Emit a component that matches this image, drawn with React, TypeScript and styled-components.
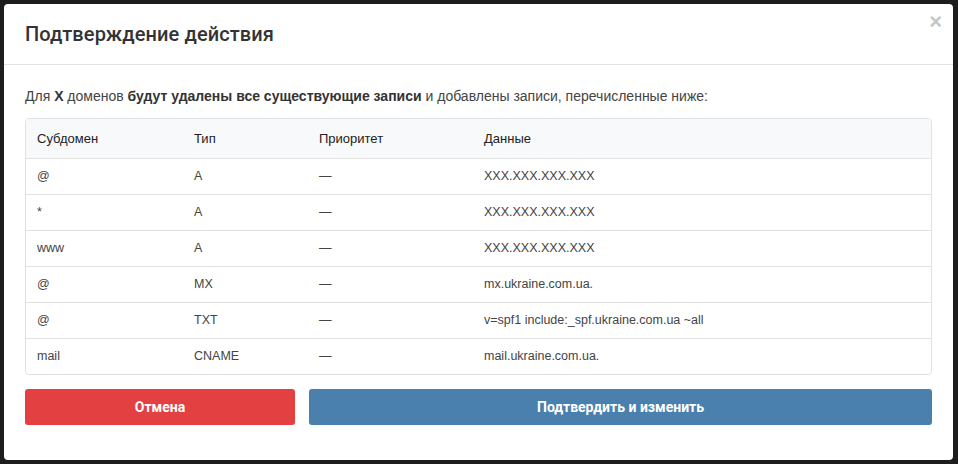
import React from "react";
import styled, { createGlobalStyle } from "styled-components";

interface DnsRecord {
  id: number;
  subdomain: string;
  type: string;
  priority: string;
  data: string;
}

const records: DnsRecord[] = [
  { id: 1, subdomain: "@", type: "A", priority: "—", data: "XXX.XXX.XXX.XXX" },
  { id: 2, subdomain: "*", type: "A", priority: "—", data: "XXX.XXX.XXX.XXX" },
  { id: 3, subdomain: "www", type: "A", priority: "—", data: "XXX.XXX.XXX.XXX" },
  { id: 4, subdomain: "@", type: "MX", priority: "—", data: "mx.ukraine.com.ua." },
  { id: 5, subdomain: "@", type: "TXT", priority: "—", data: "v=spf1 include:_spf.ukraine.com.ua ~all" },
  { id: 6, subdomain: "mail", type: "CNAME", priority: "—", data: "mail.ukraine.com.ua." },
];

const GlobalStyle = createGlobalStyle`
  html, body {
    margin: 0;
    padding: 0;
    background: #1d1d1d;
    font-family: "Liberation Sans", Arial, sans-serif;
  }
`;

const Backdrop = styled.div`
  width: 958px;
  height: 464px;
  padding: 4px 5px 4px 4px;
  box-sizing: border-box;
  background: #1d1d1d;
`;

const Modal = styled.div`
  position: relative;
  height: 100%;
  background: #fff;
  border-radius: 4px;
  display: flex;
  flex-direction: column;
`;

const Header = styled.div`
  height: 60px;
  border-bottom: 1px solid #e2e2e2;
  display: flex;
  align-items: center;
  padding: 0 21px;
`;

const Title = styled.h2`
  margin: 0;
  font-family: Roboto, "Liberation Sans", Arial, sans-serif;
  font-size: 20px;
  font-weight: 500;
  color: #333;
  letter-spacing: 0.1px;
`;

const Close = styled.button`
  position: absolute;
  top: 7px;
  right: 11px;
  border: 0;
  background: none;
  padding: 0;
  font-family: "Liberation Sans", Arial, sans-serif;
  font-size: 22px;
  font-weight: 700;
  line-height: 1;
  color: #c6c6c6;
  cursor: pointer;
`;

const Body = styled.div`
  padding: 21px 21px 0;
  display: flex;
  flex-direction: column;
`;

const Lead = styled.p`
  margin: 0 0 12px;
  font-size: 14px;
  color: #444;
  line-height: 20px;

  b {
    color: #333;
  }
`;

const TableBox = styled.div`
  border: 1px solid #e2e2e2;
  border-radius: 4px;
  overflow: hidden;
`;

const Table = styled.table`
  width: 100%;
  border-collapse: collapse;
  table-layout: fixed;
  font-size: 12.5px;
  color: #444;
`;

const Th = styled.th<{ $w?: number }>`
  box-sizing: border-box;
  width: ${(p) => (p.$w ? `${p.$w}px` : "auto")};
  text-align: left;
  font-size: 13px;
  font-weight: 400;
  color: #222;
  background: #f8f9fa;
  height: 39px;
  padding: 0 11px;
  border-bottom: 1px solid #e2e2e2;
`;

const Td = styled.td`
  height: 35px;
  padding: 0 11px;
  border-bottom: 1px solid #e2e2e2;

  tr:last-child & {
    border-bottom: 0;
  }
`;

const Actions = styled.div`
  display: grid;
  grid-template-columns: 270px 1fr;
  gap: 14px;
  margin-top: 14px;
`;

const Button = styled.button<{ $tone: "danger" | "primary" }>`
  height: 36px;
  border: 0;
  border-radius: 3px;
  background: ${(p) => (p.$tone === "danger" ? "#e34141" : "#4a80ae")};
  color: #fff;
  font-family: Roboto, "Liberation Sans", Arial, sans-serif;
  font-size: 14px;
  font-weight: 700;
  cursor: pointer;
`;

export default function App() {
  return (
    <>
      <GlobalStyle />
      <Backdrop>
        <Modal>
          <Header>
            <Title>Подтверждение действия</Title>
          </Header>
          <Close aria-label="Закрыть">×</Close>
          <Body>
            <Lead>
              Для <b>X</b> доменов <b>будут удалены все существующие записи</b> и добавлены записи,
              перечисленные ниже:
            </Lead>
            <TableBox>
              <Table>
                <thead>
                  <tr>
                    <Th $w={157}>Субдомен</Th>
                    <Th $w={125}>Тип</Th>
                    <Th $w={165}>Приоритет</Th>
                    <Th>Данные</Th>
                  </tr>
                </thead>
                <tbody>
                  {records.map((r) => (
                    <tr key={r.id}>
                      <Td>{r.subdomain}</Td>
                      <Td>{r.type}</Td>
                      <Td>{r.priority}</Td>
                      <Td>{r.data}</Td>
                    </tr>
                  ))}
                </tbody>
              </Table>
            </TableBox>
            <Actions>
              <Button $tone="danger">Отмена</Button>
              <Button $tone="primary">Подтвердить и изменить</Button>
            </Actions>
          </Body>
        </Modal>
      </Backdrop>
    </>
  );
}
